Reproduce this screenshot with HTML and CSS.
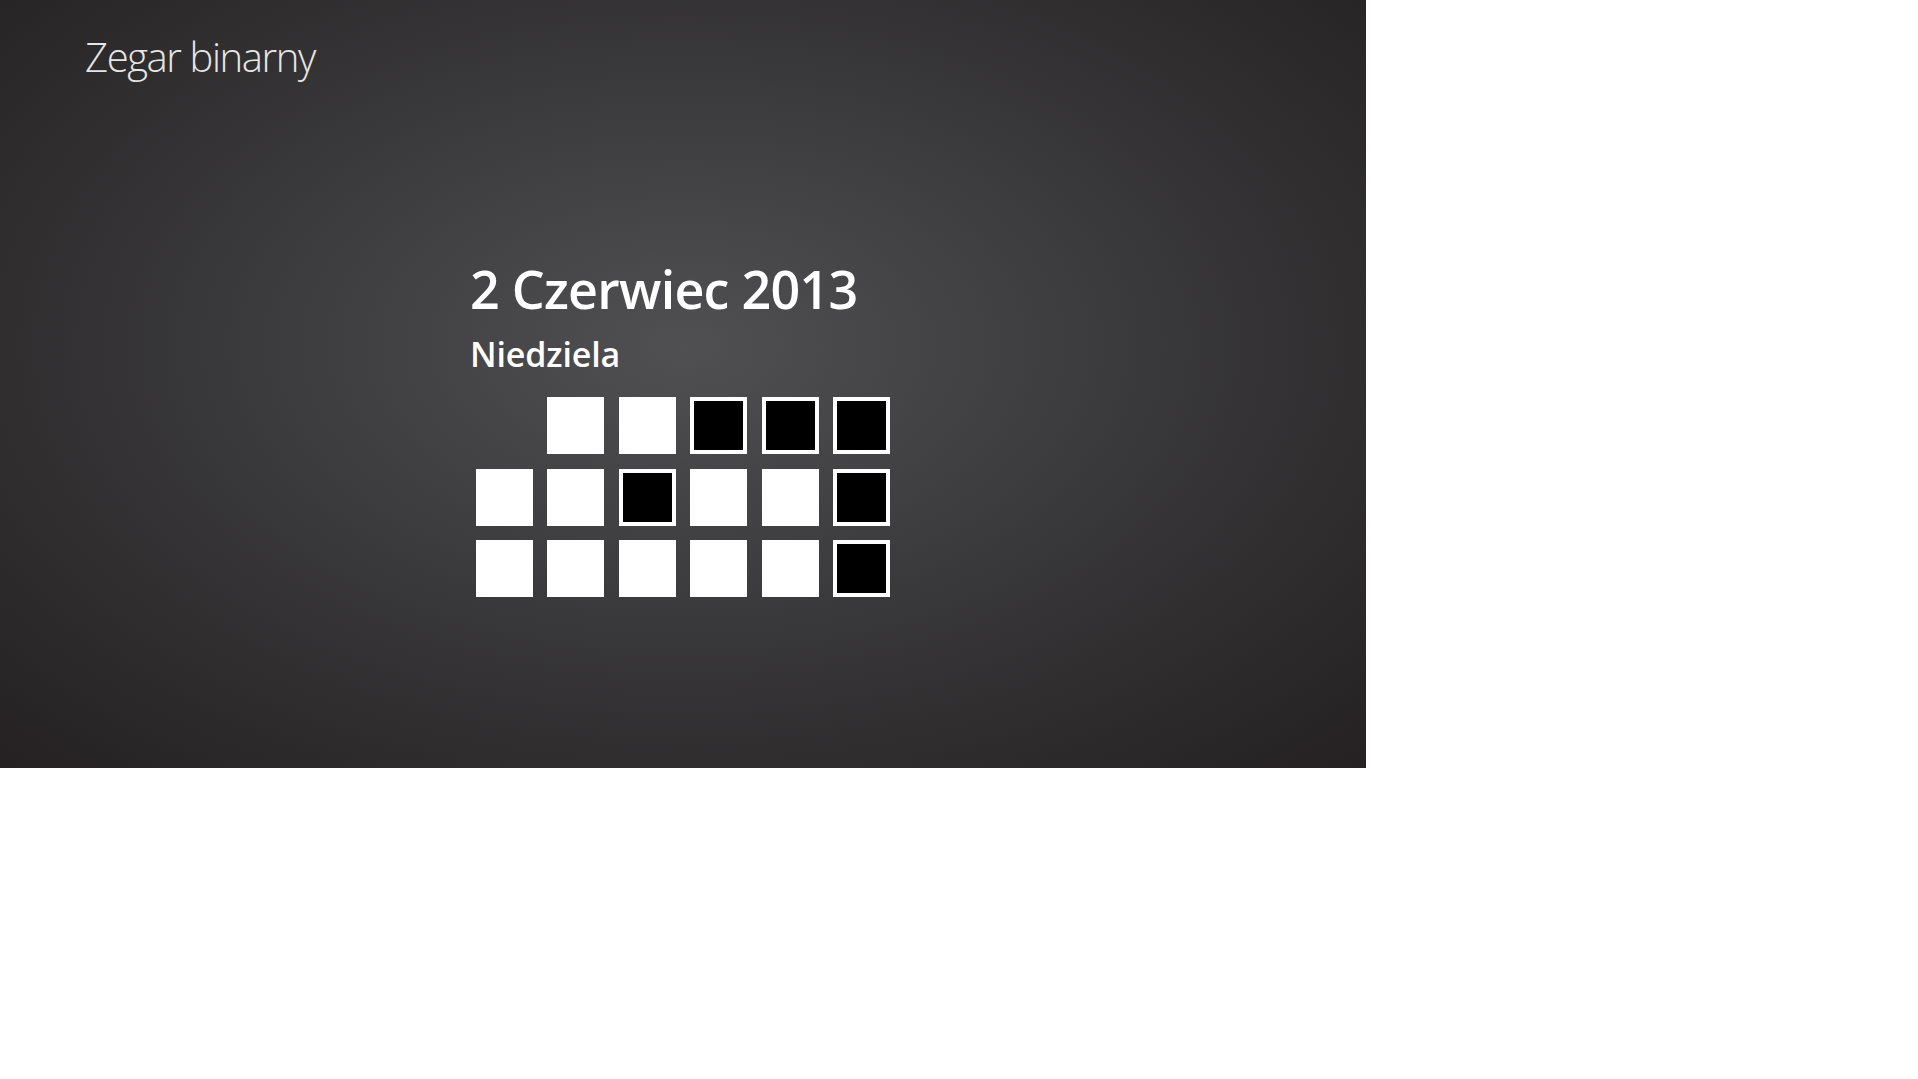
FILE: index.html
```html
<!DOCTYPE html>
<html lang="pl">
<head>
<meta charset="utf-8">
<title>Zegar binarny</title>
<link rel="stylesheet" href="styles.css">
</head>
<body>
<div class="app">
  <h1 class="title">Zegar binarny</h1>
  <div class="clock">
    <div class="date">2 Czerwiec 2013</div>
    <div class="day">Niedziela</div>
    <div class="grid">
      <div class="row">
        <span class="cell empty"></span>
        <span class="cell on"></span>
        <span class="cell on"></span>
        <span class="cell off"></span>
        <span class="cell off"></span>
        <span class="cell off"></span>
      </div>
      <div class="row">
        <span class="cell on"></span>
        <span class="cell on"></span>
        <span class="cell off"></span>
        <span class="cell on"></span>
        <span class="cell on"></span>
        <span class="cell off"></span>
      </div>
      <div class="row">
        <span class="cell on"></span>
        <span class="cell on"></span>
        <span class="cell on"></span>
        <span class="cell on"></span>
        <span class="cell on"></span>
        <span class="cell off"></span>
      </div>
    </div>
  </div>
</div>
</body>
</html>
```
FILE: styles.css
```css
html, body {
  margin: 0;
  padding: 0;
  background: #ffffff;
}

.app {
  width: 1366px;
  height: 768px;
  box-sizing: border-box;
  background: radial-gradient(ellipse 75% 80% at 50% 45%, #505052 0%, #3c3b3d 40%, #2c2a2b 75%, #231f20 100%);
  padding: 32px 0 0 85px;
  font-family: "Open Sans", "Noto Sans", sans-serif;
  color: #ffffff;
  overflow: hidden;
}

.title {
  margin: 0;
  font-size: 40px;
  font-weight: 300;
  line-height: 50px;
  color: #e6e6e6;
  letter-spacing: -1.4px;
}

.clock {
  margin: 177px 0 0 385px;
  display: flex;
  flex-direction: column;
}

.date {
  font-size: 52px;
  font-weight: 600;
  line-height: 60px;
  letter-spacing: -0.75px;
}

.day {
  font-size: 34px;
  font-weight: 600;
  line-height: 40px;
  margin-top: 15px;
  letter-spacing: -0.15px;
}

.grid {
  margin: 23px 0 0 6px;
  display: flex;
  flex-direction: column;
  gap: 14.5px;
}

.row {
  display: flex;
  gap: 14.4px;
}

.cell {
  width: 57px;
  height: 57px;
  box-sizing: border-box;
  display: block;
}

.cell.on {
  background: #ffffff;
}

.cell.off {
  background: #000000;
  border: 4px solid #ffffff;
}

.cell.empty {
  background: transparent;
}
```
